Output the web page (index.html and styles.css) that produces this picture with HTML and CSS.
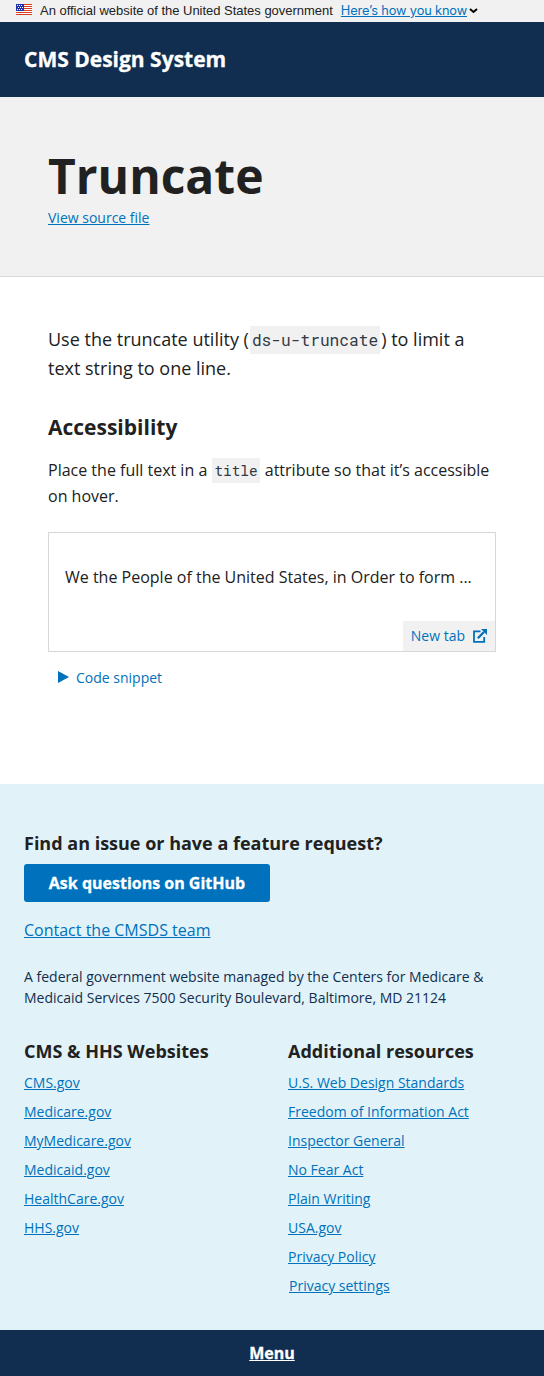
FILE: index.html
```html
<!DOCTYPE html>
<html lang="en">
<head>
<meta charset="utf-8">
<title>Truncate - CMS Design System</title>
<link rel="stylesheet" href="styles.css">
</head>
<body>
<div class="banner">
  <svg class="flag" width="16" height="11" viewBox="0 0 16 11"><path fill="#fff" d="M0 0h16v11H0z"/><path fill="#db3e1f" d="M0 0h16v1H0zM0 2h16v1H0zM0 4h16v1H0zM0 6h16v1H0zM0 8h16v1H0zM0 10h16v1H0z"/><path fill="#1e33b1" d="M0 0h8v7H0z"/><path fill="#fff" d="M1 1h1v1H1zM3 1h1v1H3zM5 1h1v1H5zM2 3h1v1H2zM4 3h1v1H4zM6 3h1v1H6zM1 5h1v1H1zM3 5h1v1H3zM5 5h1v1H5z"/></svg>
  <span class="banner-text">An official website of the United States government</span>
  <a class="banner-link" href="#">Here’s how you know</a>
  <svg class="caret" width="9" height="6" viewBox="0 0 9 6"><path d="M1 1l3.5 3L8 1" fill="none" stroke="#000" stroke-width="2"/></svg>
</div>
<header class="site-header">CMS Design System</header>
<div class="page-header">
  <h1>Truncate</h1>
  <a href="#">View source file</a>
</div>
<main>
  <p class="intro">Use the truncate utility (<code>ds-u-truncate</code>) to limit a<br>text string to one line.</p>
  <h2>Accessibility</h2>
  <p class="body-text">Place the full text in a <code>title</code> attribute so that it’s accessible on hover.</p>
  <div class="example">
    <p class="truncate" title="We the People of the United States, in Order to form a more perfect Union">We the People of the United States, in Order to form ...</p>
    <a class="new-tab" href="#">New tab
      <svg width="14" height="14" viewBox="0 0 14 14"><path d="M7.5 2.4H1v10.4h10.2V8" fill="none" stroke="#0071bc" stroke-width="1.8"/><path d="M4.8 9.2L11 3" fill="none" stroke="#0071bc" stroke-width="2.3"/><path d="M8 0h6v6z" fill="#0071bc"/></svg></a>
  </div>
  <button class="snippet"><svg width="11" height="12" viewBox="0 0 11 12"><path d="M0 0l11 6-11 6z" fill="#0071bc"/></svg>Code snippet</button>
</main>
<footer>
  <h3>Find an issue or have a feature request?</h3>
  <a class="button" href="#">Ask questions on GitHub</a>
  <a class="contact" href="#">Contact the CMSDS team</a>
  <p class="address">A federal government website managed by the Centers for Medicare &amp; Medicaid Services 7500 Security Boulevard, Baltimore, MD 21124</p>
  <div class="columns">
    <div class="column"><h3>CMS &amp; HHS Websites</h3>
      <ul><li><a href="#">CMS.gov</a></li><li><a href="#">Medicare.gov</a></li><li><a href="#">MyMedicare.gov</a></li><li><a href="#">Medicaid.gov</a></li><li><a href="#">HealthCare.gov</a></li><li><a href="#">HHS.gov</a></li></ul></div>
    <div class="column"><h3>Additional resources</h3>
      <ul><li><a href="#">U.S. Web Design Standards</a></li><li><a href="#">Freedom of Information Act</a></li><li><a href="#">Inspector General</a></li><li><a href="#">No Fear Act</a></li><li><a href="#">Plain Writing</a></li><li><a href="#">USA.gov</a></li><li><a href="#">Privacy Policy</a></li><li class="settings"><a href="#">Privacy settings</a></li></ul></div>
  </div>
</footer>
<nav class="menu-bar"><a href="#">Menu</a></nav>
</body>
</html>
```

FILE: styles.css
```css
* { box-sizing: border-box; }
body { margin: 0; font: 16px/26px "Open Sans", sans-serif; color: #212121; background: #fff; }
h1, h2, h3, p, ul { margin: 0; padding: 0; }
a { color: #0071bc; }
.banner { display: flex; height: 22px; align-items: center; padding: 0 16px; background: #f1f1f1; font: 13px/20px "Liberation Sans", Arial, sans-serif; color: #212121; white-space: nowrap; }
.flag { margin: -4px 8px 0 0; }
.banner-text { letter-spacing: -0.02px; }
.banner-link { width: 126px; margin-left: 8px; font-family: Inter, sans-serif; font-size: 12.8px; letter-spacing: -0.14px; }
.caret { margin-left: 2px; }
.site-header { height: 75px; padding: 21px 24px; background: #112e51; color: #fff; font-size: 21px; line-height: 32px; font-weight: 700; -webkit-text-stroke: 0.3px #fff; }
.page-header { height: 180px; padding: 48px; background: #f1f1f1; border-bottom: 1px solid #d6d7d9; font-size: 14px; line-height: 21px; }
h1 { font-size: 48px; line-height: 62px; font-weight: 700; }
.page-header a { display: block; }
main { height: 507px; padding: 48px; }
.intro { font-size: 18px; line-height: 29px; }
code { margin: 0 1px; padding: 3px 2px; font-family: "Roboto Mono", "DejaVu Sans Mono", monospace; font-size: 0.9em; line-height: 1; background: #f1f1f1; color: #323a45; }
.intro code { padding-bottom: 4px; }
h2 { margin-top: 30px; font-size: 21px; line-height: 28px; }
.body-text { margin-top: 16px; }
.example { position: relative; height: 120px; margin-top: 23px; padding: 31px 16px; border: 1px solid #d6d7d9; }
.truncate { overflow: hidden; white-space: nowrap; text-overflow: ellipsis; }
.new-tab { position: absolute; right: 0; bottom: 0; display: flex; align-items: center; gap: 8px; height: 30px; padding: 0 8px; background: #f1f1f1; font-size: 14px; text-decoration: none; }
.snippet { display: flex; align-items: center; gap: 7px; margin-top: 15px; padding: 0 10px; border: 0; background: none; color: #0071bc; font: 14px/21px "Open Sans", sans-serif; }
.snippet svg { margin-top: -2px; }
footer { height: 546px; padding: 47px 24px 0; background: #e1f3f8; }
h3 { font-size: 18px; line-height: 24px; }
.button { display: block; width: 246px; height: 38px; margin-top: 9px; border-radius: 3px; background: #0071bc; color: #fff; font-weight: 700; line-height: 38px; text-align: center; text-decoration: none; -webkit-text-stroke: 0.3px #fff; }
.contact { display: block; width: max-content; margin-top: 15px; }
.address { margin-top: 23px; font-size: 14px; line-height: 21px; color: #112e51; }
.columns { display: grid; grid-template-columns: 264px 1fr; margin-top: 31px; }
ul { list-style: none; margin-top: 9px; font-size: 14px; line-height: 21px; }
li { margin-bottom: 8px; }
.settings { padding-left: 1px; }
.menu-bar { height: 46px; background: #112e51; text-align: center; line-height: 46px; font-weight: 700; }
.menu-bar a { color: #fff; -webkit-text-stroke: 0.3px #fff; }
```
